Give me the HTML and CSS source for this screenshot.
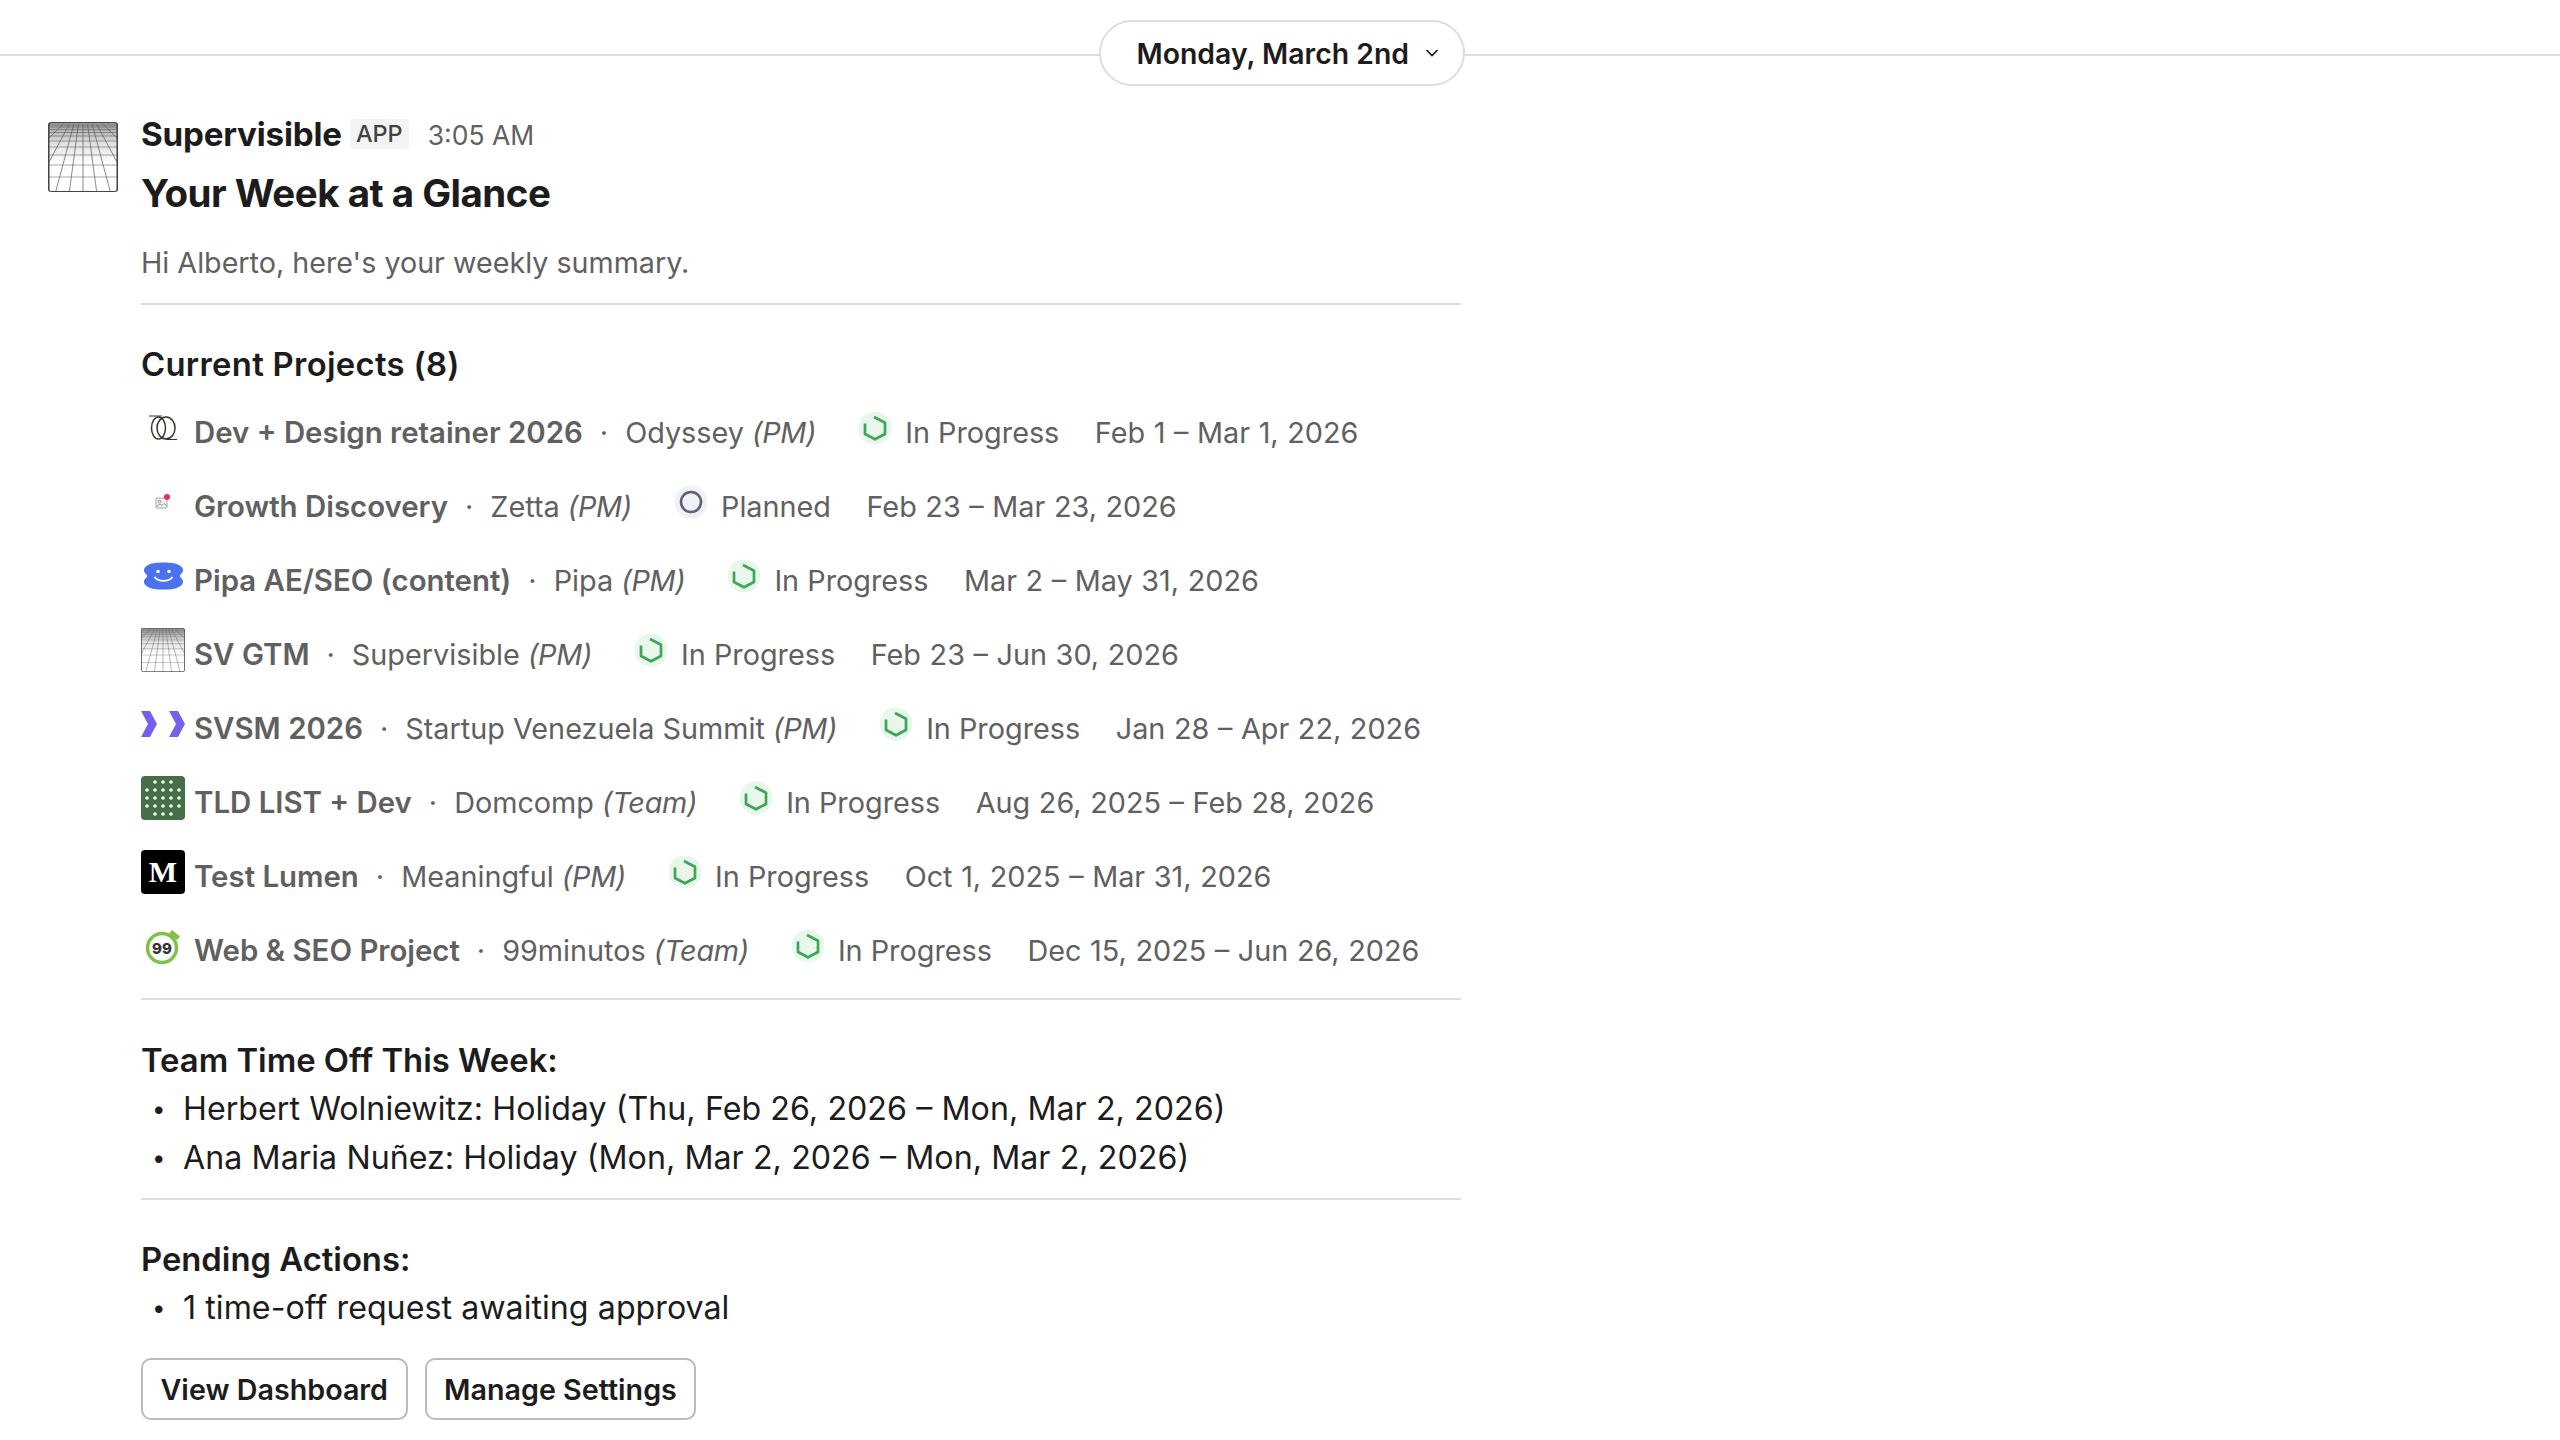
FILE: index.html
```html
<!DOCTYPE html>
<html lang="en">
<head>
<meta charset="utf-8">
<title>Your Week at a Glance</title>
<link rel="stylesheet" href="styles.css">
</head>
<body>
<svg class="defs" width="0" height="0" aria-hidden="true">
  <defs>
    <linearGradient id="fade" x1="0" y1="0" x2="0" y2="1">
      <stop offset="0" stop-color="#555"/><stop offset=".3" stop-color="#ccc"/><stop offset=".6" stop-color="#fff"/><stop offset="1" stop-color="#fff"/>
    </linearGradient>
    <symbol id="grid" viewBox="0 0 46 70" preserveAspectRatio="none">
      <rect x=".5" y=".5" width="45" height="69" rx="2" fill="url(#fade)" fill-opacity=".6"/>
      <g stroke="#555" stroke-width=".55" fill="none">
        <path d="M23 2V70M20 2L14 70M26 2L32 70M17 2L5 70M29 2L41 70M14 2L0 42M32 2L46 42M10 2L0 17M36 2L46 17"/>
        <path d="M0 3H46M0 5H46M0 7.500H46M0 10.500H46M0 14H46M0 19H46M0 25H46M0 33H46M0 43H46M0 55H46" stroke-opacity=".75"/>
      </g>
      <rect x=".5" y=".5" width="45" height="69" rx="2" fill="none" stroke="#444" stroke-width="1"/>
    </symbol>
    <symbol id="progress" viewBox="0 0 34 34">
      <circle cx="17" cy="17" r="16.500" fill="#e9f6ec"/>
      <path d="M7 12.500V23L17 28.300L27 23V11.700L16 6" fill="none" stroke="#3da658" stroke-width="2.700" stroke-linejoin="round"/>
    </symbol>
  </defs>
</svg>

<header class="day-bar">
  <button class="day-pill">Monday, March 2nd
    <svg class="chev" viewBox="0 0 14 10"><path d="M1.500 2L7 7.500L12.500 2" fill="none" stroke="#1d1c1d" stroke-width="1.700"/></svg>
  </button>
</header>

<main class="message">
  <svg class="avatar"><use href="#grid"/></svg>
  <div class="body">
    <div class="meta">
      <span class="sender">Supervisible</span>
      <span class="app">APP</span>
      <span class="time">3:05 AM</span>
    </div>
    <h1 class="title">Your Week at a Glance</h1>
    <p class="intro">Hi Alberto, here's your weekly summary.</p>
    <hr class="rule">

    <h2 class="head head-projects">Current Projects (8)</h2>
    <ul class="projects">
      <li class="project">
        <span class="logo"><svg width="30" height="26" viewBox="0 0 30 26"><g fill="none" stroke="#2f3b2a" stroke-width="1.500"><ellipse cx="10.500" cy="13" rx="7" ry="11"/><ellipse cx="18" cy="13" rx="9" ry="11"/><path d="M1 1H14M18 24.500H29" stroke-width="1"/></g></svg></span>
        <b>Dev + Design retainer 2026</b><span class="sep">·</span>Odyssey <i>(PM)</i>
        <svg class="status"><use href="#progress"/></svg><span class="state">In Progress</span><span class="date">Feb 1 – Mar 1, 2026</span>
      </li>
      <li class="project">
        <span class="logo"><svg width="16" height="18" viewBox="0 0 16 18"><rect x="1" y="5" width="11" height="10" rx="1" fill="#f1f1f1" stroke="#aaa"/><circle cx="4.500" cy="8.500" r="1.300" fill="none" stroke="#999"/><path d="M1 14L5 11L7 12.500L9 10.500L12 13" fill="none" stroke="#999"/><circle cx="12" cy="4" r="3" fill="#e0335f"/></svg></span>
        <b>Growth Discovery</b><span class="sep">·</span>Zetta <i>(PM)</i>
        <svg class="status" viewBox="0 0 34 34"><circle cx="17" cy="17" r="16.500" fill="#f0f1f5"/><circle cx="17" cy="17" r="10" fill="none" stroke="#5b6178" stroke-width="2.600"/></svg><span class="state">Planned</span><span class="date">Feb 23 – Mar 23, 2026</span>
      </li>
      <li class="project">
        <span class="logo"><svg width="41" height="28" viewBox="0 0 40 28"><path d="M20 .5C27 .5 33 1 37 4C40.500 6.500 40 10 37.500 12C36 13.200 36 14.800 37.500 16C40 18 40.500 21.500 37 24C33 27 27 27.500 20 27.500C13 27.500 7 27 3 24C-.5 21.500 0 18 2.500 16C4 14.800 4 13.200 2.500 12C0 10 -.5 6.500 3 4C7 1 13 .5 20 .5Z" fill="#4a72f0"/><circle cx="14.500" cy="9.500" r="1.800" fill="#fff"/><circle cx="25.500" cy="9.500" r="1.800" fill="#fff"/><path d="M11.500 15.500C15 20 25 20 28.500 15.500" fill="none" stroke="#fff" stroke-width="1.800" stroke-linecap="round"/></svg></span>
        <b>Pipa AE/SEO (content)</b><span class="sep">·</span>Pipa <i>(PM)</i>
        <svg class="status"><use href="#progress"/></svg><span class="state">In Progress</span><span class="date">Mar 2 – May 31, 2026</span>
      </li>
      <li class="project">
        <span class="logo"><svg class="square"><use href="#grid"/></svg></span>
        <b>SV GTM</b><span class="sep">·</span>Supervisible <i>(PM)</i>
        <svg class="status"><use href="#progress"/></svg><span class="state">In Progress</span><span class="date">Feb 23 – Jun 30, 2026</span>
      </li>
      <li class="project">
        <span class="logo"><svg width="44" height="26" viewBox="0 0 44 26"><path d="M0 0H9L16 13L9 26H0L7 13ZM28 0H37L44 13L37 26H28L35 13Z" fill="#7560ec"/></svg></span>
        <b>SVSM 2026</b><span class="sep">·</span>Startup Venezuela Summit <i>(PM)</i>
        <svg class="status"><use href="#progress"/></svg><span class="state">In Progress</span><span class="date">Jan 28 – Apr 22, 2026</span>
      </li>
      <li class="project">
        <span class="logo"><svg class="square" viewBox="0 0 44 44"><rect width="44" height="44" rx="4" fill="#456f47"/><g fill="#fff"><circle cx="14" cy="6" r="1.800"/><circle cx="22" cy="6" r="1.800"/><circle cx="30" cy="6" r="1.800"/><circle cx="6" cy="14" r="1.800"/><circle cx="14" cy="14" r="1.800"/><circle cx="22" cy="14" r="1.800"/><circle cx="30" cy="14" r="1.800"/><circle cx="38" cy="14" r="1.800"/><circle cx="6" cy="22" r="1.800"/><circle cx="14" cy="22" r="1.800"/><circle cx="22" cy="22" r="1.800"/><circle cx="30" cy="22" r="1.800"/><circle cx="38" cy="22" r="1.800"/><circle cx="6" cy="30" r="1.800"/><circle cx="14" cy="30" r="1.800"/><circle cx="22" cy="30" r="1.800"/><circle cx="30" cy="30" r="1.800"/><circle cx="38" cy="30" r="1.800"/><circle cx="14" cy="38" r="1.800"/><circle cx="22" cy="38" r="1.800"/><circle cx="30" cy="38" r="1.800"/></g></svg></span>
        <b>TLD LIST + Dev</b><span class="sep">·</span>Domcomp <i>(Team)</i>
        <svg class="status"><use href="#progress"/></svg><span class="state">In Progress</span><span class="date">Aug 26, 2025 – Feb 28, 2026</span>
      </li>
      <li class="project">
        <span class="logo logo-m">M</span>
        <b>Test Lumen</b><span class="sep">·</span>Meaningful <i>(PM)</i>
        <svg class="status"><use href="#progress"/></svg><span class="state">In Progress</span><span class="date">Oct 1, 2025 – Mar 31, 2026</span>
      </li>
      <li class="project">
        <span class="logo"><svg width="38" height="38" viewBox="0 0 38 38"><circle cx="18" cy="21" r="14.500" fill="none" stroke="#85bf4b" stroke-width="3.500"/><path d="M28 3L36 9.500L33 13L25 6.500Z" fill="#85bf4b"/><text class="ninety" x="18" y="26.500" text-anchor="middle">99</text></svg></span>
        <b>Web &amp; SEO Project</b><span class="sep">·</span>99minutos <i>(Team)</i>
        <svg class="status"><use href="#progress"/></svg><span class="state">In Progress</span><span class="date">Dec 15, 2025 – Jun 26, 2026</span>
      </li>
    </ul>
    <hr class="rule">

    <h2 class="head">Team Time Off This Week:</h2>
    <ul class="bullets">
      <li>Herbert Wolniewitz: Holiday (Thu, Feb 26, 2026 – Mon, Mar 2, 2026)</li>
      <li>Ana Maria Nuñez: Holiday (Mon, Mar 2, 2026 – Mon, Mar 2, 2026)</li>
    </ul>
    <hr class="rule">

    <h2 class="head">Pending Actions:</h2>
    <ul class="bullets">
      <li>1 time-off request awaiting approval</li>
    </ul>
    <div class="actions">
      <button class="btn">View Dashboard</button>
      <button class="btn">Manage Settings</button>
    </div>
  </div>
</main>
</body>
</html>
```
FILE: styles.css
```css
* { box-sizing: border-box; }
html, body { margin: 0; background: #fff; }
body {
  height: 1440px;
  overflow: hidden;
  font-family: Inter, "Liberation Sans", sans-serif;
  font-size: 30px;
  color: #1d1c1d;
}
.defs { display: block; height: 0; }
.day-bar {
  height: 86px;
  padding-top: 20px;
  display: flex;
  justify-content: center;
  background: linear-gradient(#ddd, #ddd) 0 54px / 100% 2px no-repeat;
}
.day-pill {
  width: 366px;
  height: 66px;
  margin-left: 3px;
  padding: 0 0 0 36px;
  display: flex;
  align-items: center;
  gap: 16px;
  background: #fff;
  border: 2px solid #ddd;
  border-radius: 33px;
  font: 600 28.400px Inter, sans-serif;
  color: #1d1c1d;
}
.chev { width: 14px; height: 10px; }
.message {
  display: flex;
  padding: 26px 0 0 48px;
  gap: 23px;
}
.avatar { width: 70px; height: 70px; margin-top: 10px; flex: none; }
.body { width: 1320px; }
.meta { display: flex; align-items: center; height: 44px; }
.sender { font-weight: 700; font-size: 33.200px; letter-spacing: -.2px; }
.app {
  margin-left: 8px;
  padding: 0 6px;
  height: 30px;
  line-height: 30px;
  font-size: 23.500px;
  font-weight: 500;
  background: #f3f3f3;
  border-radius: 4px;
  color: #454245;
}
.time { margin: 2px 0 0 19px; font-size: 26.500px; color: #616061; }
.title { margin: 9px 0 0; font-size: 38.500px; line-height: 56px; font-weight: 700; letter-spacing: -.5px; }
.intro { margin: 21px 0 0; font-size: 28.700px; line-height: 42px; color: #616061; }
.rule { margin: 19px 0 0; height: 2px; border: 0; background: #ddd; }
.head { margin: 37.500px 0 0; font-size: 32.800px; line-height: 44px; font-weight: 600; }
.head-projects { margin-top: 37px; letter-spacing: .3px; }
.projects { margin: 9px 0 0; padding: 0; list-style: none; }
.projects + .rule { margin-top: 11px; }
.project {
  height: 74px;
  display: flex;
  align-items: center;
  font-size: 28.800px;
  color: #616061;
  white-space: pre;
}
.project b { font-weight: 600; font-size: 29.400px; }
.project i { letter-spacing: -.3px; }
.logo {
  width: 44px;
  height: 44px;
  margin-right: 9px;
  margin-top: -8px;
  display: flex;
  align-items: center;
  justify-content: center;
  flex: none;
}
.square { width: 44px; height: 44px; }
.logo-m {
  background: #000;
  border-radius: 4px;
  color: #fff;
  font: 700 30px "Liberation Serif", serif;
}
.ninety { font: 800 15px Inter, sans-serif; fill: #333; }
.sep { margin: 0 17px; }
.status { width: 34px; height: 34px; margin: -8px 13px 0 42px; flex: none; }
.date { margin-left: 35.500px; word-spacing: .5px; }
.bullets { margin: 2px 0 0; padding: 0; list-style: none; }
.bullets li {
  height: 49px;
  line-height: 49px;
  padding-left: 42px;
  font-size: 32.200px;
  word-spacing: .2px;
  position: relative;
}
.bullets li::before {
  content: "•";
  position: absolute;
  left: 11px;
  font-size: 24px;
}
.bullets + .rule { margin-top: 16px; }
.actions { display: flex; gap: 17px; margin-top: 26px; }
.btn {
  height: 62px;
  padding: 0 17.500px;
  background: #fff;
  border: 2px solid #bbb;
  border-radius: 10px;
  font: 600 28.700px Inter, sans-serif;
  color: #1d1c1d;
}
```
